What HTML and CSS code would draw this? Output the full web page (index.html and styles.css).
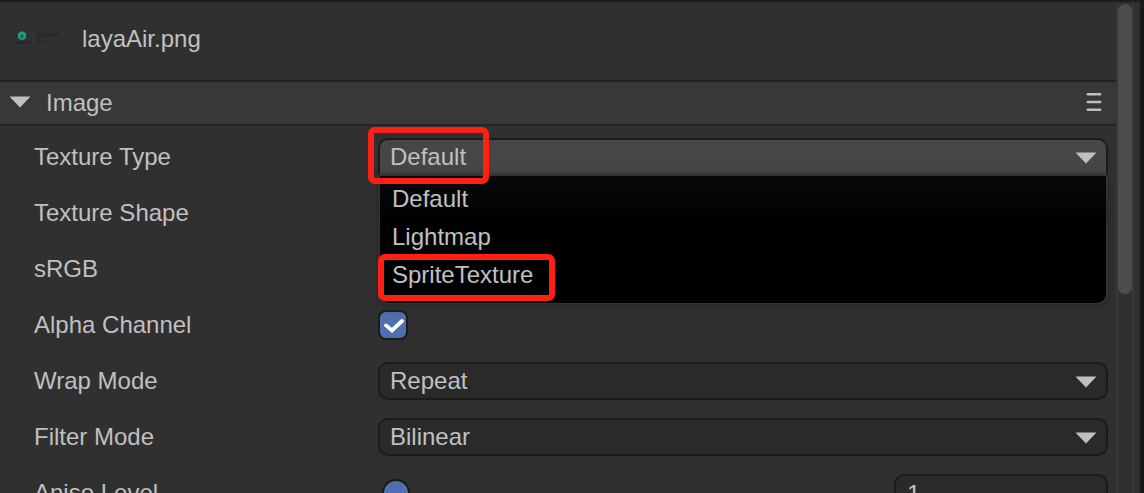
FILE: index.html
```html
<!DOCTYPE html>
<html lang="en">
<head>
<meta charset="utf-8">
<title>Inspector</title>
<link rel="stylesheet" href="styles.css">
</head>
<body>
<div class="panel">
  <main class="content">
    <header class="asset">
      <div class="thumb">
        <div class="brand">
          <svg class="hex" width="8" height="10" viewBox="0 0 8 10"><path d="M4 0 8 2.3V7.2L4 9.5 0 7.2V2.3Z" fill="#219b85"/><path d="M4 3.2 5.3 4.4V6.8H2.7V4.4Z" fill="#24534b"/></svg>
          <span class="brand-name">LAYABOX</span>
        </div>
        <div class="product">
          <span class="product-name">LAYAAIR</span>
          <span class="tagline">Interactive 3D engine</span>
        </div>
      </div>
      <span class="asset-name">layaAir.png</span>
    </header>
    <div class="section">
      <svg class="arrow" width="22" height="12" viewBox="0 0 22 12"><path d="M.5.5h21L11 11.5Z"/></svg>
      <span class="section-title">Image</span>
      <svg class="menu-icon" width="16" height="20" viewBox="0 0 16 20"><path d="M1.8 2.3h12.4M1.8 10h12.4M1.8 17.7h12.4"/></svg>
    </div>
    <div class="rows">
      <div class="row">
        <span class="label">Texture Type</span>
        <div class="select open">
          <span>Default</span>
          <svg class="arrow" width="22" height="12" viewBox="0 0 22 12"><path d="M.5.5h21L11 11.5Z"/></svg>
          <div class="options">
            <div class="option">Default</div>
            <div class="option">Lightmap</div>
            <div class="option">SpriteTexture</div>
          </div>
          <div class="mark mark-value"></div>
          <div class="mark mark-option"></div>
        </div>
      </div>
      <div class="row">
        <span class="label">Texture Shape</span>
        <div class="select"></div>
      </div>
      <div class="row">
        <span class="label">sRGB</span>
      </div>
      <div class="row">
        <span class="label">Alpha Channel</span>
        <div class="check"><svg width="26" height="26" viewBox="0 0 26 26"><path d="M6 13.4 12 18.4 22 9"/></svg></div>
      </div>
      <div class="row">
        <span class="label">Wrap Mode</span>
        <div class="select">
          <span>Repeat</span>
          <svg class="arrow" width="22" height="12" viewBox="0 0 22 12"><path d="M.5.5h21L11 11.5Z"/></svg>
        </div>
      </div>
      <div class="row">
        <span class="label">Filter Mode</span>
        <div class="select">
          <span>Bilinear</span>
          <svg class="arrow" width="22" height="12" viewBox="0 0 22 12"><path d="M.5.5h21L11 11.5Z"/></svg>
        </div>
      </div>
      <div class="row">
        <span class="label">Aniso Level</span>
        <div class="slider"><div class="knob"></div></div>
        <div class="number">1</div>
      </div>
    </div>
  </main>
  <div class="scrollbar"><div class="scroll-thumb"></div></div>
</div>
</body>
</html>
```
FILE: styles.css
```css
* { box-sizing: border-box; }

body {
  margin: 0;
  height: 493px;
  overflow: hidden;
  background: #191919;
  color: #c0c0c0;
  font: 24px/28px "Liberation Sans", Arial, sans-serif;
}

.panel {
  display: flex;
  height: 493px;
  margin-right: 4px;
  border-top: 2px solid #1d1d1d;
  background: #303030;
  overflow: hidden;
}

.content { flex: 1; min-width: 0; }

.asset {
  display: flex;
  align-items: center;
  height: 78px;
  padding: 0 0 4px 13px;
}

.asset-name { margin-left: 19px; }

.thumb {
  display: flex;
  width: 50px;
  height: 14px;
  margin-bottom: 3px;
  color: #1b2140;
  font-weight: bold;
  overflow: hidden;
}

.brand {
  display: flex;
  flex-direction: column;
  align-items: center;
  width: 21px;
  padding-right: 3px;
  border-right: 1px solid #383838;
}

.hex { display: block; flex: none; }
.brand-name { font-size: 3.6px; line-height: 4px; }

.product {
  display: flex;
  flex-direction: column;
  align-items: center;
  width: 29px;
  padding-top: 1px;
}

.product-name { font-size: 5px; line-height: 6px; }
.tagline { margin-top: 2px; font-size: 2.5px; line-height: 3px; white-space: nowrap; }

.section {
  display: flex;
  align-items: center;
  height: 46px;
  padding: 0 14px 0 9px;
  border-top: 2px solid #202020;
  border-bottom: 2px solid #242424;
  background: #383838;
}

.section-title { flex: 1; margin-left: 15px; }

.arrow { display: block; flex: none; fill: #c0c0c0; }
.section .arrow { margin-bottom: 2px; }
.select .arrow { margin-top: 2px; }
.menu-icon { display: block; margin-bottom: 2px; fill: none; stroke: #c0c0c0; stroke-width: 2.4; stroke-linecap: round; }

.rows { padding: 3px 8px 0 34px; }

.row {
  display: flex;
  align-items: center;
  height: 56px;
}

.label { flex: none; width: 344px; }

.select {
  position: relative;
  flex: 1;
  display: flex;
  align-items: center;
  justify-content: space-between;
  height: 38px;
  padding: 0 9px 0 10px;
  border: 2px solid #1b1b1b;
  border-radius: 10px;
  background: #2a2a2a;
}

.select.open {
  z-index: 2;
  border-bottom-color: #303030;
  border-radius: 10px 10px 0 0;
  background: #464646;
}

.options {
  position: absolute;
  top: 36px;
  left: 0;
  right: 0;
  height: 127px;
  padding: 6px 12px;
  border-radius: 0 0 9px 9px;
  background: linear-gradient(#090909, #000 45px);
  box-shadow: 0 0 2px 1px #3a3a3a, 0 2px 8px 2px #272727;
}

.option { height: 38px; line-height: 34px; }

.mark {
  position: absolute;
  border: 6px solid #ff2014;
  border-radius: 7px;
}

.mark-value { left: -12.5px; top: -13.5px; width: 121px; height: 57px; }
.mark-option { left: -2px; top: 114px; width: 177px; height: 47px; }

.check {
  width: 30px;
  height: 30px;
  border: 2px solid #1b1b1b;
  border-radius: 8px;
  background: #4f6fae;
}

.check svg { display: block; fill: none; stroke: #fff; stroke-width: 3.8; stroke-linecap: round; }

.slider { flex: 1; padding-left: 4px; }
.knob { width: 28px; height: 28px; border: 2px solid #1b1b1b; border-radius: 50%; background: #4f6fae; }

.number {
  width: 214px;
  height: 38px;
  padding: 4px 11px;
  border: 2px solid #1b1b1b;
  border-radius: 10px;
  background: #2a2a2a;
}

.scrollbar {
  width: 18px;
  margin-right: 6px;
  padding-top: 2px;
  border: solid #383838;
  border-width: 0 2px;
}

.scroll-thumb { height: 290px; border-radius: 7px; background: #4d4d4d; }
```
